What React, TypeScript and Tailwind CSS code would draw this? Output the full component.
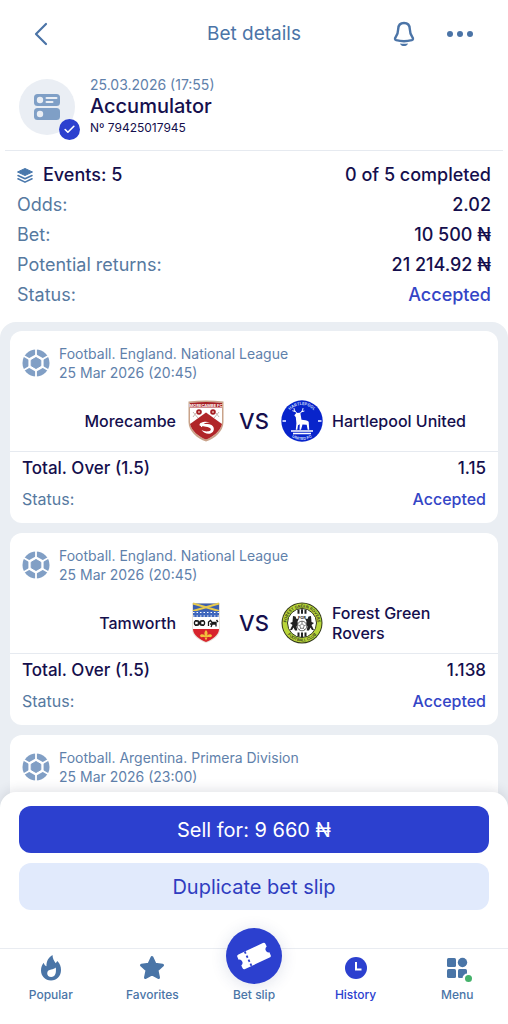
import { ReactNode } from 'react';
import { Check } from 'lucide-react';

interface Team {
  name: string;
  crest: ReactNode;
}

interface BetEvent {
  id: number;
  league: string;
  date: string;
  home?: Team;
  away?: Team;
  market?: string;
  odds?: string;
  status?: string;
}

function BackIcon() {
  return (
    <svg width="14" height="24" viewBox="0 0 14 24" fill="none" stroke="currentColor" strokeWidth="2.2" strokeLinecap="round" strokeLinejoin="round">
      <path d="M12 2 2 12l10 10" />
    </svg>
  );
}

function BellIcon() {
  return (
    <svg width="24" height="26" viewBox="0 0 24 26" fill="none">
      <path
        d="M12 2C8.400 2 6.300 4.500 6.200 8c-.1 4-.7 5.800-2.600 8.300-.9 1.300-.8 2.500.6 2.900 4.800 1.200 10.800 1.200 15.600 0 1.400-.4 1.500-1.600.6-2.900-1.900-2.500-2.500-4.300-2.600-8.300C17.700 4.500 15.600 2 12 2Z"
        stroke="currentColor"
        strokeWidth="2.4"
        strokeLinejoin="round"
      />
      <path d="M8 22.400c2.600.5 5.400.5 8 0-.7 1.700-2.200 2.700-4 2.700s-3.300-1-4-2.700Z" fill="currentColor" />
    </svg>
  );
}

function DotsIcon() {
  return (
    <svg width="28" height="8" viewBox="0 0 28 8" fill="currentColor">
      <circle cx="4" cy="4" r="3" />
      <circle cx="14" cy="4" r="3" />
      <circle cx="24" cy="4" r="3" />
    </svg>
  );
}

function SlipIcon() {
  return (
    <svg width="26" height="26" viewBox="0 0 26 26">
      <rect width="26" height="12" rx="3.500" fill="#7f9fc6" />
      <rect y="14" width="26" height="12" rx="3.500" fill="#7f9fc6" />
      <g fill="#eaeef4">
        <circle cx="6" cy="6" r="3.200" />
        <circle cx="6" cy="20" r="3.200" />
        <rect x="11.500" y="3" width="12" height="2" rx="1" />
        <rect x="11.500" y="7" width="8" height="2" rx="1" />
      </g>
    </svg>
  );
}

function StackIcon() {
  return (
    <svg width="16" height="15" viewBox="0 0 16 15">
      <path d="M8 .5 15.500 4 8 7.500.5 4Z" fill="#4a78ac" stroke="#4a78ac" strokeLinejoin="round" />
      <path d="m1 7.500 7 3.300 7-3.300M1 10.800l7 3.300 7-3.300" fill="none" stroke="#4a78ac" strokeWidth="1.600" strokeLinecap="round" strokeLinejoin="round" />
    </svg>
  );
}

function BallIcon() {
  return (
    <svg width="28" height="28" viewBox="0 0 28 28">
      <circle cx="14" cy="14" r="13.500" fill="#819fc5" />
      <path d="M14 0v28M1.900 7l24.200 14M26.100 7 1.900 21" stroke="#fff" strokeWidth="1.800" />
      <path d="M14 5.200 21.600 9.600v8.800L14 22.800l-7.600-4.400V9.600Z" fill="#fff" />
      <path d="M14 8.500 18.800 11.250v5.500L14 19.500l-4.800-2.750v-5.500Z" fill="#819fc5" stroke="#819fc5" strokeLinejoin="round" />
    </svg>
  );
}

function MorecambeCrest() {
  return (
    <svg width="42" height="42" viewBox="0 0 42 42">
      <path d="M3.500 1.500Q21-.5 38.500 1.500v20.500C38.500 31 30 38.500 21 41.500 12 38.500 3.500 31 3.500 22Z" fill="#c9a38a" />
      <path d="M5 3Q21 1 37 3v19c0 8-8 14.500-16 17.600C13 36.500 5 30 5 22Z" fill="#fff" />
      <path d="M5 3Q21 1 37 3v4.500H5Z" fill="#a51f24" />
      <text x="21" y="7" textAnchor="middle" fontSize="4" fontWeight="700" fill="#fff">MORECAMBE FC</text>
      <path d="M21 12.500 37 24c-1.500 7-9 13-16 15.600C14 37 6.500 31 5 24Z" fill="#b02528" />
      <circle cx="14" cy="12" r="2.800" fill="#a51f24" />
      <circle cx="28" cy="12" r="2.800" fill="#a51f24" />
      <circle cx="14" cy="12" r="1" fill="#e5b4a8" />
      <circle cx="28" cy="12" r="1" fill="#e5b4a8" />
      <path d="m8 12 5 6M34 12l-5 6M8 17l3-4M34 17l-3-4" stroke="#b8a69e" strokeWidth=".8" />
      <path d="M25 22.500c-5-1.800-10.500 0-10.500 2.300 0 2 4 1.500 8 2.200 4 .8 4.500 3.500 1 4.300-2.500.5-5-.2-7-1.300 2 3 6 4.500 9 3.500 4-1.300 4.500-6.500 1-8.500-2.500-1.300-6-.8-8-1.200 1.500-1.100 4-1.300 6.500-1.300Z" fill="#fff" />
    </svg>
  );
}

function HartlepoolCrest() {
  return (
    <svg width="42" height="42" viewBox="0 0 42 42">
      <circle cx="21" cy="21" r="20.700" fill="#0824cb" />
      <path id="hufc-top" d="M5 21a16 16 0 0 1 32 0" fill="none" />
      <path id="hufc-bottom" d="M2 21a19 19 0 0 0 38 0" fill="none" />
      <text fontSize="4" fontWeight="600" fill="#dfe5ff" textAnchor="middle">
        <textPath href="#hufc-top" startOffset="50%">HARTLEPOOL</textPath>
      </text>
      <text fontSize="4" fontWeight="600" fill="#dfe5ff" textAnchor="middle">
        <textPath href="#hufc-bottom" startOffset="50%">UNITED FC</textPath>
      </text>
      <path d="M1.500 21H5M37 21h3.500" stroke="#b9c4ff" strokeWidth="2" />
      <path d="M16.500 13.500c-2-1-3.200-2.800-3.500-5M14.300 11.500l-2.500-.7M18.500 13.500c2-1 3.200-2.800 3.500-5M20.500 11.800l2.500-.7" stroke="#fff" strokeWidth="1" fill="none" strokeLinecap="round" />
      <path d="m15.300 13 4-.3 1.200 7c3 .5 5.500.2 7.200 2l.5 8h-1.500l-1-5-4.200-.3-1.500 5.300h-1.500l.3-5.500-1.800 1-.7 4.500h-1.500l.6-6.500-.6-6-1.500-2Z" fill="#fff" />
      <path d="M10 31h22M12 33.500h18" stroke="#fff" strokeWidth="1.500" />
    </svg>
  );
}

function TamworthCrest() {
  return (
    <svg width="42" height="42" viewBox="0 0 42 42">
      <path d="M7 1h28v26c0 7-7 11.500-14 14-7-2.500-14-7-14-14Z" fill="#e9e4dc" />
      <path d="M8 1.500h26V9H8Z" fill="#3c5eae" />
      <path d="m8 1.500 26 7.500M34 1.500 8 9" stroke="#e6c94d" strokeWidth="2" />
      <path d="M8 9h26v6H8Z" fill="#3f67bd" />
      <path d="M8 10.500h26M8 14h26" stroke="#fff" strokeWidth="1" strokeDasharray="1.500 2" />
      <path d="M8 15h26v12H8Z" fill="#fff" />
      <g fill="none" stroke="#171717" strokeWidth="1.300">
        <circle cx="11.800" cy="21" r="2.400" />
        <circle cx="17.200" cy="21" r="2.400" />
        <path d="m10 18.300 9 5.400M19 18.300l-9 5.400" strokeWidth="1" />
        <path d="M23.500 24v-4l2-1.500 1.500 2h4v4M25 22h6M28 20l-2 5M31.500 18l1.500 2" />
      </g>
      <path d="M8 27h26c0 6-6.500 10.500-13 13-6.500-2.500-13-7-13-13Z" fill="#d7232c" />
      <path d="M21 28c-2 2-2 4-.6 6.500-1-2.500-4.400-3-5.400-1 .2 1.500 1.400 2 2.500 1.500h7c1.100.5 2.300 0 2.500-1.500-1-2-4.400-1.500-5.400 1C23 32 23 30 21 28ZM19.500 35.500h3L21 38.500Z" fill="#f2c23c" />
    </svg>
  );
}

function ForestGreenCrest() {
  return (
    <svg width="42" height="42" viewBox="0 0 42 42">
      <circle cx="21" cy="21" r="20.500" fill="#31371a" />
      <circle cx="21" cy="21" r="19.500" fill="#b9d63a" />
      <circle cx="21" cy="21" r="14.500" fill="#fff" stroke="#31371a" />
      <path id="fgr-top" d="M5.500 21a15.500 15.500 0 0 1 31 0" fill="none" />
      <path id="fgr-bottom" d="M2.500 21a18.500 18.500 0 0 0 37 0" fill="none" />
      <text fontSize="4" fontWeight="600" fill="#31371a" textAnchor="middle">
        <textPath href="#fgr-top" startOffset="50%">FOREST GREEN ROVERS</textPath>
      </text>
      <text fontSize="4" fontWeight="600" fill="#31371a" textAnchor="middle">
        <textPath href="#fgr-bottom" startOffset="50%">FOOTBALL CLUB</textPath>
      </text>
      <path d="M17.500 7.800v4M21 7.300v4.500M24.500 7.800v4M17.500 30.500v4M21 30.500v4.500M24.500 30.500v4" stroke="#222" strokeWidth="2" />
      <text x="21" y="16.500" fontSize="4" fontWeight="700" textAnchor="middle" fill="#222">FGR</text>
      <path d="m12 14 2.500.5 1 2.500 2.500-.5-1.500 3 .5 3-1.500 2 .8 4h-2.300l-1.500-3-1.500 2.500H9l2.500-5-2.500-2 2.500-1ZM30 14l-2.500.5-1 2.500-2.500-.5 1.500 3-.5 3 1.500 2-.8 4H28l1.500-3 1.500 2.500h2l-2.500-5 2.500-2-2.500-1Z" fill="#222" />
      <circle cx="21" cy="24" r="4.800" fill="#fff" stroke="#444" strokeWidth=".8" />
      <path d="m21 21.800 2.200 1.800-.9 2.700h-2.600l-.9-2.700ZM21 19.200v2.600M16.500 22.800l2.300.8M25.500 22.800l-2.300.8M18 28l1.700-1.700M24 28l-1.700-1.700" stroke="#555" strokeWidth=".7" fill="none" />
    </svg>
  );
}

function FireIcon() {
  return (
    <svg width="26" height="28" viewBox="0 0 26 28">
      <path d="M14.500 1c.2 3.500 1.300 5.500 3.200 8.200l1.600-2.200c2.700 2.700 3.700 5.500 3.700 9 0 6-4.200 10.500-10 10.500S3 22 3 16.500c0-3.500 1.200-6 2.700-7.700.5 2 1.300 3 2.800 3.500C8.200 7 10.700 3.500 14.500 1Z" fill="currentColor" />
      <path d="M17.800 13.500c.7 5.500-.6 9.500-4.600 9.500-2.500 0-4-1.600-4-3.800 0-2.500 1.800-3.400 4-3.800 1.800-.3 3.400-.8 4.600-1.900Z" fill="#fff" />
    </svg>
  );
}

function StarIcon() {
  return (
    <svg width="28" height="28" viewBox="0 0 28 28" fill="currentColor" stroke="currentColor" strokeWidth="3" strokeLinejoin="round">
      <path d="m14 3.500 3.100 6.800 7.400.9-5.500 5 1.500 7.300L14 19.900l-6.500 3.600L9 16.200l-5.500-5 7.400-.9Z" />
    </svg>
  );
}

function TicketIcon() {
  return (
    <svg width="36" height="36" viewBox="0 0 36 36">
      <g transform="rotate(-25 18 18)">
        <path d="M4.500 10h27a2 2 0 0 1 2 2v2.800a3.300 3.300 0 0 0 0 6.400v2.800a2 2 0 0 1-2 2h-27a2 2 0 0 1-2-2v-2.800a3.300 3.300 0 0 0 0-6.400v-2.800a2 2 0 0 1 2-2Z" fill="#fff" />
        <path d="M11.500 10v16" stroke="#2c40cf" strokeWidth="1.800" strokeDasharray="2.400 2.100" />
      </g>
    </svg>
  );
}

function ClockIcon() {
  return (
    <svg width="24" height="24" viewBox="0 0 24 24">
      <circle cx="12" cy="12" r="11" fill="currentColor" />
      <path d="M12 6v7.500h5.500" fill="none" stroke="#fff" strokeWidth="2" />
    </svg>
  );
}

function MenuIcon() {
  return (
    <svg width="26" height="26" viewBox="0 0 26 26" fill="currentColor">
      <rect x="3" y="3" width="9" height="9" rx="1.500" />
      <circle cx="18.500" cy="7.500" r="4.700" />
      <rect x="3" y="14" width="9" height="9" rx="1.500" />
      <rect x="14" y="14" width="9" height="9" rx="1.500" />
      <circle cx="23.500" cy="23.500" r="5" fill="#fff" />
    </svg>
  );
}

const summary = [
  { label: 'Odds:', value: '2.02' },
  { label: 'Bet:', value: '10 500 ₦' },
  { label: 'Potential returns:', value: '21 214.92 ₦' },
];

const events: BetEvent[] = [
  {
    id: 1,
    league: 'Football. England. National League',
    date: '25 Mar 2026 (20:45)',
    home: { name: 'Morecambe', crest: <MorecambeCrest /> },
    away: { name: 'Hartlepool United', crest: <HartlepoolCrest /> },
    market: 'Total. Over (1.5)',
    odds: '1.15',
    status: 'Accepted',
  },
  {
    id: 2,
    league: 'Football. England. National League',
    date: '25 Mar 2026 (20:45)',
    home: { name: 'Tamworth', crest: <TamworthCrest /> },
    away: { name: 'Forest Green Rovers', crest: <ForestGreenCrest /> },
    market: 'Total. Over (1.5)',
    odds: '1.138',
    status: 'Accepted',
  },
  {
    id: 3,
    league: 'Football. Argentina. Primera Division',
    date: '25 Mar 2026 (23:00)',
  },
];

function EventCard({ event }: { event: BetEvent }) {
  return (
    <article className="shrink-0 rounded-xl bg-white last:grow last:pb-5">
      <div className="flex items-center gap-[9px] px-3 pt-[13px]">
        <BallIcon />
        <div className="text-[14px] leading-[19px] text-[#5f81ab]">
          <p>{event.league}</p>
          <p>{event.date}</p>
        </div>
      </div>

      {event.home && event.away && (
        <>
          <div className="flex h-[70px] items-center border-b border-[#e6eaf0] px-3 pt-2 text-[16px] leading-5 font-medium text-[#150f4d]">
            <div className="flex flex-1 items-center justify-end gap-[9px]">
              <span className="text-right">{event.home.name}</span>
              {event.home.crest}
            </div>
            <span className="w-[54px] text-center text-[22px] leading-6">VS</span>
            <div className="flex flex-1 items-center gap-[9px]">
              {event.away.crest}
              <span className="max-w-[140px]">{event.away.name}</span>
            </div>
          </div>
          <div className="px-3 pt-[3px] pb-2.5">
            <div className="flex items-center justify-between text-[17px] leading-[27px] font-medium text-[#150f4d]">
              <span>{event.market}</span>
              <span>{event.odds}</span>
            </div>
            <div className="flex items-center justify-between pt-1 text-[16px] leading-[27px]">
              <span className="text-[#56799f]">Status:</span>
              <span className="font-medium text-[#3445c6]">{event.status}</span>
            </div>
          </div>
        </>
      )}
    </article>
  );
}

const tabs = [
  { label: 'Popular', icon: <FireIcon /> },
  { label: 'Favorites', icon: <StarIcon /> },
  { label: 'Bet slip', icon: <TicketIcon />, main: true },
  { label: 'History', icon: <ClockIcon />, active: true },
  { label: 'Menu', icon: <MenuIcon />, dot: true },
];

function TabBar() {
  return (
    <nav className="mt-[38px] grid grid-cols-5 border-t border-[#e9ecf1] pb-[21px] text-[12px] leading-4 font-medium">
      {tabs.map((tab) => (
        <a
          key={tab.label}
          href="#"
          className={`flex flex-col items-center ${tab.active ? 'text-[#2c40cf]' : 'text-[#4a75a7]'}`}
        >
          {tab.main ? (
            <span className="-mt-[21px] mb-[3px] flex size-[56px] items-center justify-center rounded-full bg-[#2c40cf] shadow-[0_2px_16px_rgba(40,60,120,0.15)]">
              {tab.icon}
            </span>
          ) : (
            <span className="relative flex h-[38px] items-center">
              {tab.icon}
              {tab.dot && <span className="absolute right-[-2px] bottom-[5px] size-[7px] rounded-full bg-[#45b26b]" />}
            </span>
          )}
          <span>{tab.label}</span>
        </a>
      ))}
    </nav>
  );
}

export default function App() {
  return (
    <div className="flex h-screen flex-col bg-white font-['Inter',sans-serif]">
      <header className="grid h-[68px] shrink-0 grid-cols-[1fr_auto_1fr] items-center px-[34px] text-[#4b74a7]">
        <button type="button" aria-label="Back" className="justify-self-start">
          <BackIcon />
        </button>
        <h1 className="text-[19px]">Bet details</h1>
        <div className="flex items-center justify-end gap-[30px]">
          <button type="button" aria-label="Notifications">
            <BellIcon />
          </button>
          <button type="button" aria-label="More">
            <DotsIcon />
          </button>
        </div>
      </header>

      <main className="flex min-h-0 flex-1 flex-col overflow-hidden">
        <section className="mx-[5px] flex h-[83px] shrink-0 items-center gap-[15px] border-b border-[#e6eaf0] px-3.5 pb-1">
          <div className="relative flex size-[56px] items-center justify-center rounded-full bg-[#eaeef4]">
            <SlipIcon />
            <span className="absolute -right-[5px] -bottom-[5px] flex size-[21px] items-center justify-center rounded-full bg-[#2c40cf] text-white">
              <Check size={13} strokeWidth={3} />
            </span>
          </div>
          <div>
            <p className="text-[14px] leading-[18px] text-[#5f81ab]">25.03.2026 (17:55)</p>
            <h2 className="text-[20px] leading-6 font-medium text-[#150f4d]">Accumulator</h2>
            <p className="text-[12px] leading-5 text-[#150f4d]">Nº 79425017945</p>
          </div>
        </section>

        <section className="shrink-0 px-[17px] pt-[9px] pb-3 text-[18px] leading-[30px] text-[#56799f]">
          <div className="flex items-center justify-between font-medium text-[#150f4d]">
            <span className="flex items-center gap-2.5">
              <StackIcon />
              Events: 5
            </span>
            <span>0 of 5 completed</span>
          </div>
          {summary.map((row) => (
            <div key={row.label} className="flex justify-between">
              <span>{row.label}</span>
              <span className="font-medium text-[#150f4d]">{row.value}</span>
            </div>
          ))}
          <div className="flex justify-between">
            <span>Status:</span>
            <span className="font-medium text-[#3445c6]">Accepted</span>
          </div>
        </section>

        <section className="flex flex-1 flex-col gap-2.5 rounded-t-2xl bg-[#eaeef3] px-2.5 pt-[9px]">
          {events.map((event) => (
            <EventCard key={event.id} event={event} />
          ))}
        </section>
      </main>

      <footer className="relative z-10 -mt-4 shrink-0 rounded-t-2xl bg-white pt-3.5 shadow-[0_-2px_12px_rgba(40,50,80,0.14)]">
        <div className="flex flex-col gap-2.5 px-[19px] text-[20px]">
          <button type="button" className="h-[47px] rounded-xl bg-[#2c40cf] text-white">
            Sell for: 9 660 ₦
          </button>
          <button type="button" className="h-[47px] rounded-xl bg-[#e1eafc] text-[#2f3dc0]">
            Duplicate bet slip
          </button>
        </div>
        <TabBar />
      </footer>
    </div>
  );
}
